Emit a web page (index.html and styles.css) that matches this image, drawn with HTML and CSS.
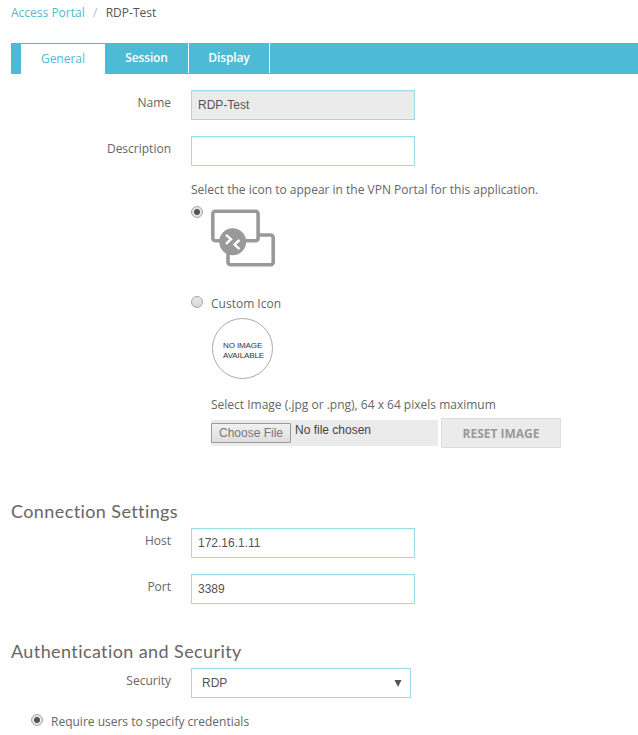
FILE: index.html
```html
<!DOCTYPE html>
<html lang="en">
<head>
<meta charset="utf-8">
<title>Access Portal - RDP-Test</title>
<link rel="stylesheet" href="styles.css">
</head>
<body>
<nav class="breadcrumb"><a class="crumb-link">Access Portal</a><span class="slash">/</span><span>RDP-Test</span></nav>
<div class="tabs">
  <div class="tab active">General</div>
  <div class="tab session">Session</div>
  <div class="tab display">Display</div>
</div>
<main>
  <div class="row"><label class="label">Name</label><input class="field disabled" value="RDP-Test" readonly></div>
  <div class="row"><label class="label">Description</label><input class="field"></div>
  <section class="icon-picker">
    <p class="hint">Select the icon to appear in the VPN Portal for this application.</p>
    <div class="choice default-choice">
      <span class="radio checked"></span>
      <svg class="rdp-icon" width="64" height="58" viewBox="0 0 64 58">
        <rect x="17" y="26" width="45.2" height="29.7" rx="2.5" fill="#fff" stroke="#999" stroke-width="3.6"/>
        <rect x="1.8" y="2.3" width="45.3" height="29.5" rx="2.5" fill="#fff" stroke="#999" stroke-width="3.6"/>
        <circle cx="21.7" cy="32.7" r="13.5" fill="#999"/>
        <path d="M15 25.8l5 4.4-5 4.7M28.5 31l-5 4.6 5 4.6" fill="none" stroke="#fff" stroke-width="2.4"/>
      </svg>
    </div>
    <div class="choice custom-choice"><span class="radio"></span><span class="choice-text">Custom Icon</span></div>
    <div class="no-image"><span>NO IMAGE<br>AVAILABLE</span></div>
    <p class="file-hint">Select Image (.jpg or .png), 64 x 64 pixels maximum</p>
    <div class="file-row">
      <div class="file"><button class="choose">Choose File</button><span class="file-name">No file chosen</span></div>
      <button class="reset">RESET IMAGE</button>
    </div>
  </section>
  <h2 class="connection">Connection Settings</h2>
  <div class="row"><label class="label">Host</label><input class="field" value="172.16.1.11"></div>
  <div class="row"><label class="label">Port</label><input class="field" value="3389"></div>
  <h2 class="security">Authentication and Security</h2>
  <div class="row"><label class="label">Security</label><div class="select"><span>RDP</span><svg width="8" height="7" viewBox="0 0 8 7"><path d="M.5 0h7L4 7z" fill="#555"/></svg></div></div>
  <div class="choice credentials"><span class="radio checked"></span><span class="choice-text">Require users to specify credentials</span></div>
</main>
</body>
</html>
```
FILE: styles.css
```css
* { box-sizing: border-box; }
body {
  margin: 0;
  height: 735px;
  overflow: hidden;
  background: #fff;
  color: #666;
  font: 12px/20px "Open Sans", sans-serif;
}
p, h2 { margin: 0; }
.breadcrumb { display: flex; height: 43px; padding: 3px 0 0 11px; color: #555; }
.crumb-link { color: #4dbbd5; }
.slash { width: 21px; text-align: center; color: #bbb; }
.tabs {
  display: flex;
  height: 31px;
  margin-left: 11px;
  padding-left: 10px;
  background: #4dbbd5;
}
.tab {
  height: 30px;
  border-right: 1px solid #fff;
  color: #fff;
  font-weight: 600;
  letter-spacing: -.12px;
  line-height: 30px;
  text-align: center;
}
.active { width: 84px; height: 30px; margin-top: 1px; border: 0; background: #fff; color: #4dbbd5; font-weight: 400; letter-spacing: 0; }
.session { width: 84px; }
.display { width: 81px; }
main { padding-top: 16px; }
.row { display: flex; height: 30px; margin-bottom: 16px; }
.label { width: 171px; margin-right: 20px; padding-top: 3px; text-align: right; }
.field, .select {
  width: 224px;
  height: 30px;
  padding: 0 6px;
  border: 1px solid #99dde9;
  border-radius: 0;
  outline: 0;
  background: #fff;
  box-shadow: inset 0 1px 1px rgba(0, 0, 0, .05);
  color: #555;
  font: 12px "Liberation Sans", sans-serif;
}
.disabled { background: #ebebeb; }
.select { display: flex; align-items: center; justify-content: space-between; width: 220px; padding: 0 8px 0 10px; box-shadow: none; }
.select svg { margin-top: 1px; }
.icon-picker { height: 318px; padding-left: 191px; }
.hint { height: 23px; margin-top: -2px; }
.choice { display: flex; }
.radio {
  width: 12px;
  height: 12px;
  margin-right: 8px;
  border: 1px solid #a5a5a5;
  border-radius: 50%;
  background: linear-gradient(#e8e8e8, #d7d7d7);
}
.checked { background: radial-gradient(circle, #555 0 2.6px, #e5e5e5 3.4px); }
.default-choice { height: 91px; }
.default-choice .radio { margin-top: 3px; }
.rdp-icon { margin-top: 6px; }
.custom-choice { height: 24px; }
.custom-choice .radio { margin-top: 2px; }
.no-image {
  display: flex;
  width: 61px;
  height: 61px;
  margin: 0 0 16px 21px;
  padding: 4px 0 0 10px;
  align-items: center;
  border: 1px solid #aaa;
  border-radius: 50%;
  color: #333;
  font: 8px/10px "Liberation Sans", sans-serif;
  letter-spacing: -.1px;
}
.file-hint { height: 23px; margin-left: 20px; }
.file-row { display: flex; align-items: center; gap: 3px; margin-left: 20px; }
.file { display: flex; width: 227px; height: 26px; padding-top: 3px; background: #ebebeb; }
.choose {
  width: 80px;
  height: 20px;
  padding: 0;
  border: 1px solid #999;
  border-radius: 1px;
  background: linear-gradient(#f1f1f1, #dedede);
  color: #777;
  font: 12px "Liberation Sans", sans-serif;
}
.file-name { margin: -3px 0 0 4px; color: #444; font: 12px/20px "Liberation Sans", sans-serif; }
.reset {
  width: 120px;
  height: 30px;
  padding: 0;
  border: 1px solid #dcdcdc;
  background: #ebebeb;
  color: #999;
  font: bold 12px "Open Sans", sans-serif;
}
h2 { height: 30px; padding: 1px 0 0 11px; font: 18px/24px Lato, "Open Sans", sans-serif; font-weight: 400; letter-spacing: .4px; }
.security { margin-top: 34px; }
.credentials { padding-left: 31px; }
.credentials .choice-text { margin-top: -2px; }
```
